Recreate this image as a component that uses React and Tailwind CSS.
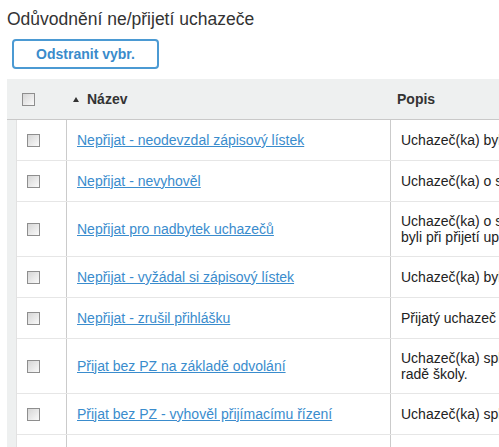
import React from "react";

const rows = [
  {
    name: "Nepřijat - neodevzdal zápisový lístek",
    popis: ["Uchazeč(ka) byl(a) nepřijat(a), protože neodevzdal(a) zápisový lístek."],
  },
  {
    name: "Nepřijat - nevyhověl",
    popis: ["Uchazeč(ka) o studium nevyhověl(a) podmínkám přijímacího řízení."],
  },
  {
    name: "Nepřijat pro nadbytek uchazečů",
    popis: [
      "Uchazeč(ka) o studium splnil(a) podmínky přijímacího řízení, ale",
      "byli při přijetí upřednostněni uchazeči s lepším výsledkem.",
    ],
  },
  {
    name: "Nepřijat - vyžádal si zápisový lístek",
    popis: ["Uchazeč(ka) byl(a) nepřijat(a), protože si vyžádal(a) zápisový lístek zpět."],
  },
  {
    name: "Nepřijat - zrušil přihlášku",
    popis: ["Přijatý uchazeč zrušil svou přihlášku ke studiu."],
  },
  {
    name: "Přijat bez PZ na základě odvolání",
    popis: [
      "Uchazeč(ka) splnil(a) podmínky a byl(a) přijat(a) na základě odvolání k",
      "radě školy.",
    ],
  },
  {
    name: "Přijat bez PZ - vyhověl přijímacímu řízení",
    popis: ["Uchazeč(ka) splnil(a) podmínky přijímacího řízení bez přijímací zkoušky."],
  },
  {
    name: "Přijat na základě přijímací zkoušky",
    popis: ["Uchazeč(ka) úspěšně vykonal(a) přijímací zkoušku."],
  },
];

const Checkbox = () => (
  <span className="block w-[13px] h-[13px] border border-[#8e8e8e] bg-gradient-to-br from-[#d6d6d6] to-[#fafafa]" />
);

const App = () => {
  return (
    <div
      className="w-[499px] h-[447px] overflow-hidden bg-white text-[#333]"
      style={{ fontFamily: '"Liberation Sans", Arial, sans-serif' }}
    >
      <h1 className="pl-[7px] pt-[9px] text-[17.5px] leading-[20px] font-normal text-[#333] whitespace-nowrap">
        Odůvodnění ne/přijetí uchazeče
      </h1>

      <div className="pl-[12px] mt-[10px]">
        <button className="w-[147px] h-[30px] border-2 border-[#4b9ad3] rounded-[4px] bg-white text-[14px] font-bold text-[#3a8bcb]">
          Odstranit vybr.
        </button>
      </div>

      {/* Tabulka */}
      <div className="mt-[10px] ml-[7px] w-[620px] bg-[#eef0f0]">
        <div className="flex h-[41px] items-center border-b border-[#c9c9c9] text-[14px] font-bold text-[#333]">
          <div className="w-[59px] pl-[15px]">
            <Checkbox />
          </div>
          <div className="w-[324px] flex items-center pl-[7px]">
            <svg width="6" height="5" viewBox="0 0 6 5" className="mr-[8px]">
              <path d="M3 0 L6 5 L0 5 Z" fill="#333" />
            </svg>
            Název
          </div>
          <div className="pl-[6px] border-l border-transparent">Popis</div>
        </div>

        <div className="ml-[9px] bg-white border-l border-[#e2e2e2]">
          {rows.map((row, i) => (
            <div
              key={i}
              className={
                row.popis.length > 1
                  ? "flex min-h-[55px] border-b border-[#e6e6e6] text-[14px]"
                  : "flex min-h-[41px] border-b border-[#e6e6e6] text-[14px]"
              }
            >
              <div className="w-[50px] shrink-0 flex items-center pl-[10px] border-r border-[#cbcbcb]">
                <Checkbox />
              </div>
              <div className="w-[324px] shrink-0 flex items-center pl-[10px] border-r border-[#cbcbcb]">
                <a href="#" className="text-[#3a8ccd] underline whitespace-nowrap">
                  {row.name}
                </a>
              </div>
              <div className="flex flex-col justify-center pl-[10px] leading-[16px] text-[#222] whitespace-nowrap">
                {row.popis.map((line, j) => (
                  <span key={j}>{line}</span>
                ))}
              </div>
            </div>
          ))}
        </div>
      </div>
    </div>
  );
};

export default App;
